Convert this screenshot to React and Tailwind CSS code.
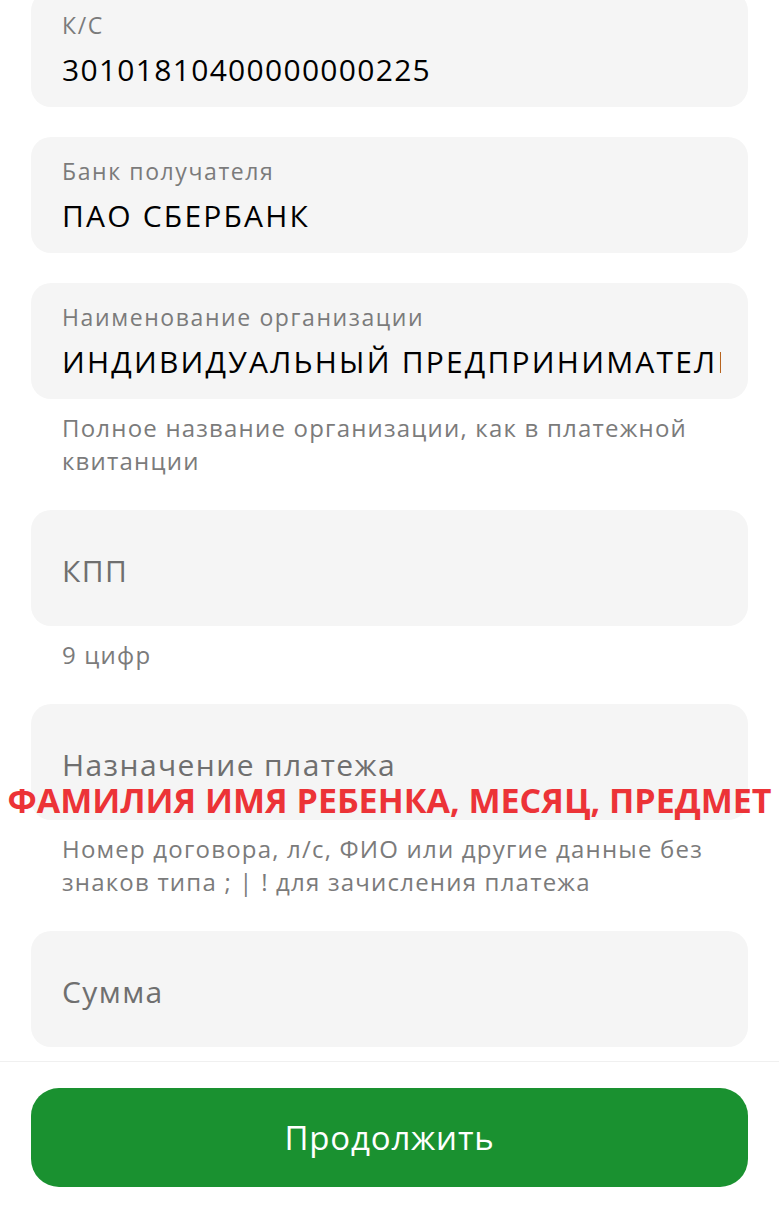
import React from "react";

const font = { fontFamily: '"Open Sans", "Noto Sans", sans-serif' };

const Field = ({ label, value, placeholder, hint, valueClass = "tracking-[1.6px]" }) => (
  <div>
    <div className="h-[116px] rounded-[20px] bg-[#f5f5f5] pl-[31px] pr-[27px] flex flex-col justify-center overflow-hidden">
      {placeholder ? (
        <div className="mt-[6px] text-[30px] leading-[36px] tracking-[1.4px] text-[#6f6f6f] whitespace-nowrap">{placeholder}</div>
      ) : (
        <>
          <div className="text-[23px] leading-[28px] tracking-[1.6px] text-[#7b7b7b] whitespace-nowrap">{label}</div>
          <div className={`mt-[14px] text-[30px] leading-[34px] font-medium text-black whitespace-nowrap overflow-hidden ${valueClass}`}>{value}</div>
        </>
      )}
    </div>
    {hint && (
      <div className="pt-[12px] pb-[3px] pl-[31px] pr-[10px] text-[24px] leading-[33px] tracking-[1.2px] text-[#7b7b7b]">
        {hint}
      </div>
    )}
  </div>
);

export default function App() {
  return (
    <div className="min-h-[1205px] bg-white overflow-hidden" style={font}>
      <div className="px-[31px] -mt-[9px] flex flex-col gap-[30px]">
        <Field label="К/С" value="30101810400000000225" valueClass="tracking-[1.3px]" />
        <Field label="Банк получателя" value="ПАО СБЕРБАНК" valueClass="tracking-[2.2px]" />
        <Field
          label="Наименование организации"
          value="ИНДИВИДУАЛЬНЫЙ ПРЕДПРИНИМАТЕЛЬ"
          valueClass="tracking-[2.2px]"
          hint="Полное название организации, как в платежной квитанции"
        />
        <Field placeholder="КПП" hint="9 цифр" />
        <div className="relative">
          <Field
            placeholder="Назначение платежа"
            hint="Номер договора, л/с, ФИО или другие данные без знаков типа ; | ! для зачисления платежа"
          />
          <div className="absolute -left-[31px] -right-[31px] top-[76px] text-center text-[34px] leading-[40px] font-bold text-[#ec3337] whitespace-nowrap">
            ФАМИЛИЯ ИМЯ РЕБЕНКА, МЕСЯЦ, ПРЕДМЕТ
          </div>
        </div>
        <Field placeholder="Сумма" />
      </div>
      <div className="mt-[14px] border-t border-[#f0f0f0] px-[31px] pt-[26px]">
        <button className="w-full h-[99px] rounded-[28px] bg-[#1a9130] text-white text-[33px] tracking-[0.8px]">
          Продолжить
        </button>
      </div>
    </div>
  );
}
